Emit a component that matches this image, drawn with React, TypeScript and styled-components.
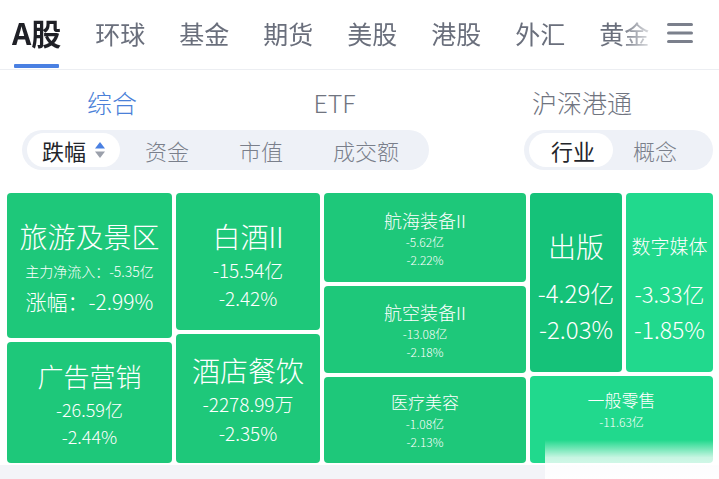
import React from "react";
import styled, { createGlobalStyle } from "styled-components";

const GlobalStyle = createGlobalStyle`
  html, body { margin: 0; padding: 0; background: #f3f4f8; }
  body { font-family: "Noto Sans CJK SC", "Noto Sans", sans-serif; }
  * { box-sizing: border-box; }
`;

const Page = styled.div`
  position: relative;
  width: 719px;
  height: 479px;
  overflow: hidden;
  background: #f3f4f8;
`;

const Main = styled.div`
  background: #ffffff;
  padding-bottom: 2px;
`;

const TopBar = styled.div`
  height: 70px;
  display: flex;
  align-items: flex-start;
  border-bottom: 1px solid #eceef2;
  padding: 10px 26px 0 12px;
`;

const TabScroller = styled.div`
  flex: 1;
  min-width: 0;
  display: flex;
  align-items: flex-start;
  gap: 34px;
  white-space: nowrap;
  overflow-x: clip;
  overflow-y: visible;
  -webkit-mask-image: linear-gradient(to right, #000 calc(100% - 40px), transparent);
  mask-image: linear-gradient(to right, #000 calc(100% - 40px), transparent);
`;

const MainTab = styled.div`
  display: flex;
  flex-direction: column;
  align-items: center;
  flex-shrink: 0;
`;

const MainTabText = styled.span`
  font-size: 30px;
  line-height: 44px;
  font-weight: 700;
  color: #1f2026;
`;

const Underline = styled.span`
  width: 45px;
  height: 4px;
  margin-top: 10px;
  border-radius: 1px;
  background: #4a80e2;
`;

const Tab = styled.span`
  flex-shrink: 0;
  margin-top: 2px;
  font-size: 25px;
  line-height: 42px;
  font-weight: 400;
  color: #6a6f7c;
`;

const MenuButton = styled.div`
  width: 26px;
  height: 42px;
  margin-top: 2px;
  margin-left: 8px;
  display: flex;
  align-items: center;
  justify-content: center;
`;

const SubTabs = styled.div`
  display: flex;
  justify-content: space-between;
  padding: 16px 87px 0 87px;
  height: 60px;
`;

const SubTab = styled.span<{ $active?: boolean }>`
  font-size: 25px;
  line-height: 32px;
  font-weight: 300;
  color: ${(p) => (p.$active ? "#4a80d8" : "#70747f")};
`;

const FilterRow = styled.div`
  display: flex;
  justify-content: space-between;
  padding: 0 6px 0 22px;
`;

const Segment = styled.div<{ $padR?: number }>`
  display: flex;
  align-items: center;
  height: 40px;
  padding: 3px ${(p) => p.$padR ?? 5}px 3px 5px;
  border-radius: 20px;
  background: #eef1f7;
`;

const SegItem = styled.div<{ $active?: boolean; $pad: string }>`
  display: flex;
  align-items: center;
  gap: 8px;
  height: 34px;
  padding: ${(p) => p.$pad};
  border-radius: 17px;
  background: ${(p) => (p.$active ? "#ffffff" : "transparent")};
  color: ${(p) => (p.$active ? "#23252b" : "#7a7f8b")};
  font-size: 22px;
  line-height: 34px;
  font-weight: ${(p) => (p.$active ? 400 : 300)};
`;

const Treemap = styled.div`
  display: flex;
  gap: 4px;
  height: 270px;
  margin-top: 23px;
  padding: 0 6px 0 7px;
`;

const Column = styled.div<{ $w: number }>`
  width: ${(p) => p.$w}px;
  flex-shrink: 0;
  display: flex;
  flex-direction: column;
  gap: 4px;
`;

const TileRow = styled.div<{ $h: number }>`
  flex: ${(p) => p.$h} 1 0;
  display: flex;
  gap: 4px;
`;

const toneColor = {
  base: "#1ec87a",
  dark: "#15c279",
  light: "#21d98d",
};

const Tile = styled.div<{
  $h?: number;
  $w?: number;
  $tone?: keyof typeof toneColor;
  $pt?: number;
  $pb?: number;
}>`
  flex: ${(p) => (p.$w ? `0 0 ${p.$w}px` : `${p.$h} 1 0`)};
  display: flex;
  flex-direction: column;
  align-items: center;
  justify-content: center;
  padding-top: ${(p) => p.$pt ?? 0}px;
  padding-bottom: ${(p) => p.$pb ?? 0}px;
  border-radius: 4px;
  background: ${(p) => toneColor[p.$tone ?? "base"]};
  color: #ffffff;
  white-space: nowrap;
`;

const Txt = styled.span<{ $fs: number; $lh: number }>`
  font-size: ${(p) => p.$fs}px;
  line-height: ${(p) => p.$lh}px;
  font-weight: 300;
`;

const Spacer = styled.span<{ $h: number }>`
  height: ${(p) => p.$h}px;
`;

const Watermark = styled.div`
  position: absolute;
  left: 545px;
  top: 440px;
  width: 174px;
  height: 39px;
  background: linear-gradient(
    to bottom,
    rgba(255, 255, 255, 0) 0%,
    rgba(255, 255, 255, 0.75) 45%,
    rgba(255, 255, 255, 0.9) 100%
  );
  pointer-events: none;
`;

const MenuIcon = () => (
  <svg width="26" height="22" viewBox="0 0 26 22">
    <rect x="0" y="1" width="26" height="3" rx="1.5" fill="#7b808c" />
    <rect x="0" y="9.5" width="26" height="3" rx="1.5" fill="#7b808c" />
    <rect x="0" y="18" width="26" height="3" rx="1.5" fill="#7b808c" />
  </svg>
);

const SortIcon = () => (
  <svg width="12" height="18" viewBox="0 0 12 18">
    <path d="M6 1 L11 7.5 L1 7.5 Z" fill="#4a80e2" />
    <path d="M6 17 L11 10.5 L1 10.5 Z" fill="#9ba0ab" />
  </svg>
);

const topTabs = ["环球", "基金", "期货", "美股", "港股", "外汇", "黄金"];

export default function App() {
  return (
    <Page>
      <GlobalStyle />
      <Main>
        <TopBar>
          <TabScroller>
            <MainTab>
              <MainTabText>A股</MainTabText>
              <Underline />
            </MainTab>
            {topTabs.map((t) => (
              <Tab key={t}>{t}</Tab>
            ))}
          </TabScroller>
          <MenuButton>
            <MenuIcon />
          </MenuButton>
        </TopBar>

        <SubTabs>
          <SubTab $active>综合</SubTab>
          <SubTab>ETF</SubTab>
          <SubTab>沪深港通</SubTab>
        </SubTabs>

        <FilterRow>
          <Segment>
            <SegItem $active $pad="0 14px 0 15px">
              跌幅
              <SortIcon />
            </SegItem>
            <SegItem $pad="0 25px">资金</SegItem>
            <SegItem $pad="0 25px">市值</SegItem>
            <SegItem $pad="0 25px">成交额</SegItem>
          </Segment>
          <Segment $padR={16}>
            <SegItem $active $pad="0 18px 0 22px">
              行业
            </SegItem>
            <SegItem $pad="0 20px">概念</SegItem>
          </Segment>
        </FilterRow>

        <Treemap>
          <Column $w={165}>
            <Tile $h={145}>
              <Txt $fs={28} $lh={40}>旅游及景区</Txt>
              <Txt $fs={14} $lh={30}>主力净流入：-5.35亿</Txt>
              <Txt $fs={21} $lh={30}>涨幅：-2.99%</Txt>
            </Tile>
            <Tile $h={121}>
              <Txt $fs={26} $lh={38}>广告营销</Txt>
              <Txt $fs={18} $lh={28}>-26.59亿</Txt>
              <Txt $fs={18} $lh={26}>-2.44%</Txt>
            </Tile>
          </Column>

          <Column $w={144}>
            <Tile $h={135} $pt={5}>
              <Txt $fs={28} $lh={40}>白酒II</Txt>
              <Txt $fs={19} $lh={28}>-15.54亿</Txt>
              <Txt $fs={19} $lh={28}>-2.42%</Txt>
            </Tile>
            <Tile $h={131}>
              <Txt $fs={28} $lh={40}>酒店餐饮</Txt>
              <Txt $fs={19} $lh={28}>-2278.99万</Txt>
              <Txt $fs={19} $lh={30}>-2.35%</Txt>
            </Tile>
          </Column>

          <Column $w={202}>
            <Tile $h={89}>
              <Txt $fs={18} $lh={26}>航海装备II</Txt>
              <Txt $fs={12} $lh={18}>-5.62亿</Txt>
              <Txt $fs={12} $lh={18}>-2.22%</Txt>
            </Tile>
            <Tile $h={87}>
              <Txt $fs={18} $lh={26}>航空装备II</Txt>
              <Txt $fs={12} $lh={18}>-13.08亿</Txt>
              <Txt $fs={12} $lh={18}>-2.18%</Txt>
            </Tile>
            <Tile $h={86}>
              <Txt $fs={17} $lh={26}>医疗美容</Txt>
              <Txt $fs={12} $lh={18}>-1.08亿</Txt>
              <Txt $fs={12} $lh={18}>-2.13%</Txt>
            </Tile>
          </Column>

          <Column $w={183}>
            <TileRow $h={180}>
              <Tile $w={92} $tone="dark">
                <Txt $fs={28} $lh={58}>出版</Txt>
                <Txt $fs={24} $lh={36}>-4.29亿</Txt>
                <Txt $fs={24} $lh={36}>-2.03%</Txt>
              </Tile>
              <Tile $w={87} $tone="light">
                <Txt $fs={19} $lh={58}>数字媒体</Txt>
                <Txt $fs={22} $lh={36}>-3.33亿</Txt>
                <Txt $fs={23} $lh={36}>-1.85%</Txt>
              </Tile>
            </TileRow>
            <Tile $h={86} $tone="light" $pb={2}>
              <Txt $fs={17} $lh={26}>一般零售</Txt>
              <Txt $fs={12} $lh={18}>-11.63亿</Txt>
              <Spacer $h={18} />
            </Tile>
          </Column>
        </Treemap>
      </Main>
      <Watermark />
    </Page>
  );
}
